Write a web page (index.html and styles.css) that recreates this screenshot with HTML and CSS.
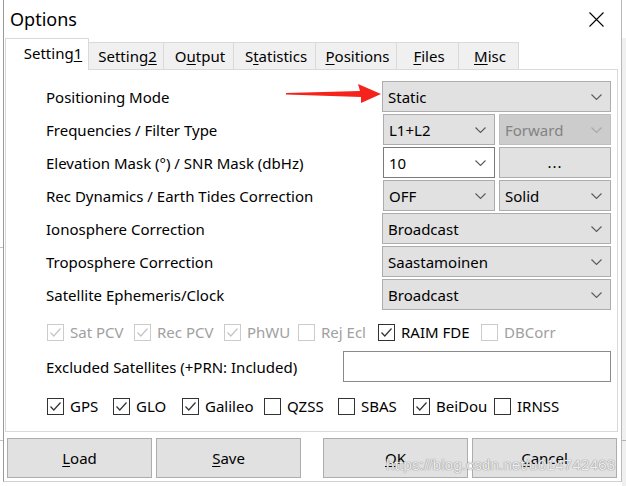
FILE: index.html
```html
<!DOCTYPE html>
<html>
<head>
<meta charset="utf-8">
<title>Options</title>
<link rel="stylesheet" href="styles.css">
</head>
<body>
<div class="window">
  <div class="titlebar">
    <span class="title">Options</span>
    <svg class="close" width="15" height="15" viewBox="0 0 15 15"><path d="M0.5 0.5 L14.5 14.5 M14.5 0.5 L0.5 14.5" stroke="#000" stroke-width="1.1" fill="none"/></svg>
  </div>
  <div class="tabs">
    <div class="tab active t1">Setting<u>1</u></div>
    <div class="tab t2">Setting<u>2</u></div>
    <div class="tab t3">O<u>u</u>tput</div>
    <div class="tab t4">S<u>t</u>atistics</div>
    <div class="tab t5"><u>P</u>ositions</div>
    <div class="tab t6"><u>F</u>iles</div>
    <div class="tab t7"><u>M</u>isc</div>
  </div>
  <div class="panel">
    <div class="form">
      <span class="lbl">Positioning Mode</span>
      <div class="ctl one"><div class="combo"><span>Static</span><svg class="chev" viewBox="0 0 11 6"><path d="M0.5 0.5 L5.5 5.5 L10.5 0.5"/></svg></div></div>

      <span class="lbl">Frequencies / Filter Type</span>
      <div class="ctl two">
        <div class="combo"><span>L1+L2</span><svg class="chev" viewBox="0 0 11 6"><path d="M0.5 0.5 L5.5 5.5 L10.5 0.5"/></svg></div>
        <div class="combo disabled"><span>Forward</span><svg class="chev" viewBox="0 0 11 6"><path d="M0.5 0.5 L5.5 5.5 L10.5 0.5"/></svg></div>
      </div>

      <span class="lbl">Elevation Mask (°) / SNR Mask (dbHz)</span>
      <div class="ctl two">
        <div class="combo edit"><span>10</span><svg class="chev" viewBox="0 0 11 6"><path d="M0.5 0.5 L5.5 5.5 L10.5 0.5"/></svg></div>
        <div class="btn dots">...</div>
      </div>

      <span class="lbl">Rec Dynamics / Earth Tides Correction</span>
      <div class="ctl two">
        <div class="combo"><span>OFF</span><svg class="chev" viewBox="0 0 11 6"><path d="M0.5 0.5 L5.5 5.5 L10.5 0.5"/></svg></div>
        <div class="combo"><span>Solid</span><svg class="chev" viewBox="0 0 11 6"><path d="M0.5 0.5 L5.5 5.5 L10.5 0.5"/></svg></div>
      </div>

      <span class="lbl">Ionosphere Correction</span>
      <div class="ctl one"><div class="combo"><span>Broadcast</span><svg class="chev" viewBox="0 0 11 6"><path d="M0.5 0.5 L5.5 5.5 L10.5 0.5"/></svg></div></div>

      <span class="lbl">Troposphere Correction</span>
      <div class="ctl one"><div class="combo"><span>Saastamoinen</span><svg class="chev" viewBox="0 0 11 6"><path d="M0.5 0.5 L5.5 5.5 L10.5 0.5"/></svg></div></div>

      <span class="lbl">Satellite Ephemeris/Clock</span>
      <div class="ctl one"><div class="combo"><span>Broadcast</span><svg class="chev" viewBox="0 0 11 6"><path d="M0.5 0.5 L5.5 5.5 L10.5 0.5"/></svg></div></div>
    </div>

    <div class="checks opts">
      <label class="chk dis"><span class="box on"><svg viewBox="0 0 15 15"><path d="M2.5 7.5 L5.8 11 L12.5 3.5"/></svg></span>Sat PCV</label>
      <label class="chk dis"><span class="box on"><svg viewBox="0 0 15 15"><path d="M2.5 7.5 L5.8 11 L12.5 3.5"/></svg></span>Rec PCV</label>
      <label class="chk dis"><span class="box on"><svg viewBox="0 0 15 15"><path d="M2.5 7.5 L5.8 11 L12.5 3.5"/></svg></span>PhWU</label>
      <label class="chk dis"><span class="box"></span>Rej Ecl</label>
      <label class="chk"><span class="box on"><svg viewBox="0 0 15 15"><path d="M2.5 7.5 L5.8 11 L12.5 3.5"/></svg></span>RAIM FDE</label>
      <label class="chk dis"><span class="box"></span>DBCorr</label>
    </div>

    <div class="excl">
      <span class="lbl">Excluded Satellites (+PRN: Included)</span>
      <div class="input"></div>
    </div>

    <div class="checks sats">
      <label class="chk"><span class="box on"><svg viewBox="0 0 15 15"><path d="M2.5 7.5 L5.8 11 L12.5 3.5"/></svg></span>GPS</label>
      <label class="chk"><span class="box on"><svg viewBox="0 0 15 15"><path d="M2.5 7.5 L5.8 11 L12.5 3.5"/></svg></span>GLO</label>
      <label class="chk"><span class="box on"><svg viewBox="0 0 15 15"><path d="M2.5 7.5 L5.8 11 L12.5 3.5"/></svg></span>Galileo</label>
      <label class="chk"><span class="box"></span>QZSS</label>
      <label class="chk"><span class="box"></span>SBAS</label>
      <label class="chk"><span class="box on"><svg viewBox="0 0 15 15"><path d="M2.5 7.5 L5.8 11 L12.5 3.5"/></svg></span>BeiDou</label>
      <label class="chk"><span class="box"></span>IRNSS</label>
    </div>
  </div>

  <div class="buttons">
    <div class="btn big"><u>L</u>oad</div>
    <div class="btn big"><u>S</u>ave</div>
    <div class="btn big ok"><u>O</u>K</div>
    <div class="btn big"><u>C</u>ancel</div>
  </div>

  <svg class="arrow" width="100" height="24" viewBox="0 0 100 24">
    <polygon points="0,9 74,7 72,0 95,10 75,19 75,13 0,10.5" fill="#f5231b"/>
  </svg>
  <div class="watermark">https://blog.csdn.net/u014742463</div>
</div>
</body>
</html>
```
FILE: styles.css
```css
html, body {
  margin: 0;
  padding: 0;
}
body {
  width: 626px;
  height: 486px;
  overflow: hidden;
  font-family: "Noto Sans", "DejaVu Sans", sans-serif;
  font-size: 15px;
  color: #000;
  background:
    linear-gradient(#c4c4c4, #c4c4c4) 0 247px / 3px 1px no-repeat,
    linear-gradient(#c4c4c4, #c4c4c4) 0 440px / 3px 1px no-repeat,
    linear-gradient(#b4b4b4, #b4b4b4) 622px 440px / 4px 1px no-repeat,
    linear-gradient(#f0f0f0, #f0f0f0) 622px 38px / 4px 448px no-repeat,
    #fff;
}
.window {
  position: relative;
  margin-left: 3px;
  width: 617px;
  height: 481px;
  border-left: 1px solid #9a9a9a;
  border-right: 1px solid #b8b8b8;
  border-bottom: 1px solid #d0d0d0;
  background: #fff;
}
.titlebar {
  height: 38px;
  display: flex;
  align-items: center;
  padding-left: 6px;
}
.title {
  font-size: 18px;
  line-height: 20px;
  margin-top: -1px;
}
.close {
  margin-left: auto;
  margin-right: 17px;
  margin-top: 1px;
}
.tabs {
  position: relative;
  z-index: 1;
  display: flex;
  align-items: flex-end;
  height: 31px;
  padding-left: 2px;
}
.tab {
  box-sizing: border-box;
  height: 27px;
  margin-left: -1px;
  border: 1px solid #d9d9d9;
  border-bottom: none;
  background: #f0f0f0;
  display: flex;
  align-items: center;
  justify-content: center;
  padding-left: 3px;
  padding-bottom: 1px;
}
.tab.active {
  height: 32px;
  margin-bottom: -1px;
  background: #fff;
  padding-left: 12px;
  padding-bottom: 4px;
}
.tab u, .btn u {
  text-underline-offset: 2px;
}
.t1 { width: 84px; }
.t2 { width: 76px; }
.t3 { width: 71px; }
.t4 { width: 83px; }
.t5 { width: 82px; }
.t6 { width: 63px; }
.t7 { width: 61px; }

.panel {
  box-sizing: border-box;
  margin-left: 1px;
  width: 613px;
  height: 363px;
  border: 1px solid #d9d9d9;
  padding: 11px 6px 0 40px;
  display: flex;
  flex-direction: column;
}
.form {
  display: grid;
  grid-template-columns: 1fr 229px;
  grid-auto-rows: 31px;
  row-gap: 2px;
  align-items: center;
}
.lbl {
  white-space: nowrap;
}
.ctl {
  display: grid;
  height: 31px;
}
.ctl.two {
  grid-template-columns: 1fr 1fr;
  column-gap: 4px;
  padding-left: 1px;
}
.combo {
  box-sizing: border-box;
  height: 31px;
  background: #e1e1e1;
  border: 1px solid #adadad;
  display: flex;
  align-items: center;
  padding: 0 8px 0 5px;
}
.combo span {
  flex: 1;
}
.chev {
  width: 11px;
  height: 6px;
  fill: none;
  stroke: #5a5a5a;
  stroke-width: 1.1;
}
.combo.disabled {
  background: #cccccc;
  border-color: #bfbfbf;
  color: #838383;
}
.combo.disabled .chev {
  stroke: #a8a8a8;
}
.combo.edit {
  background: #fff;
  border-color: #7a7a7a;
}
.btn {
  box-sizing: border-box;
  background: #e1e1e1;
  border: 1px solid #adadad;
  display: flex;
  align-items: center;
  justify-content: center;
}
.btn.dots {
  height: 31px;
  letter-spacing: 1px;
  padding-bottom: 2px;
}

.checks {
  display: grid;
  align-items: center;
  height: 17px;
  padding-left: 1px;
}
.opts {
  margin-top: 12px;
  grid-template-columns: 87px 90px 74px 80px 103px 1fr;
}
.sats {
  margin-top: 14px;
  grid-template-columns: 66px 69px 82px 74px 75px 81px 1fr;
}
.chk {
  display: flex;
  align-items: center;
  white-space: nowrap;
}
.box {
  box-sizing: border-box;
  width: 17px;
  height: 17px;
  border: 1px solid #333;
  background: #fff;
  margin-right: 6px;
  display: flex;
  flex: none;
}
.box svg {
  width: 15px;
  height: 15px;
  fill: none;
  stroke: #333;
  stroke-width: 1.2;
}
.chk.dis {
  color: #a0a0a0;
}
.chk.dis .box {
  border-color: #cccccc;
}
.chk.dis .box svg {
  stroke: #c4c4c4;
}
.excl {
  margin-top: 12px;
  height: 31px;
  display: flex;
  align-items: center;
}
.input {
  box-sizing: border-box;
  margin-left: auto;
  width: 268px;
  height: 31px;
  border: 1px solid #8a8a8a;
  background: #fff;
}

.buttons {
  display: flex;
  padding: 6px 0 0 3px;
}
.btn.big {
  width: 145px;
  height: 40px;
  margin-right: 4px;
}
.btn.big.ok {
  margin-left: 18px;
}
.arrow {
  position: absolute;
  left: 282px;
  top: 84px;
}
.watermark {
  position: absolute;
  left: 382px;
  top: 456px;
  font-family: "Liberation Sans", Arial, sans-serif;
  font-size: 15.5px;
  color: rgba(255, 255, 255, 0.85);
  text-shadow: 0 0 1px #8a8a8a, 0 0 1px #8a8a8a;
  white-space: nowrap;
}
```
